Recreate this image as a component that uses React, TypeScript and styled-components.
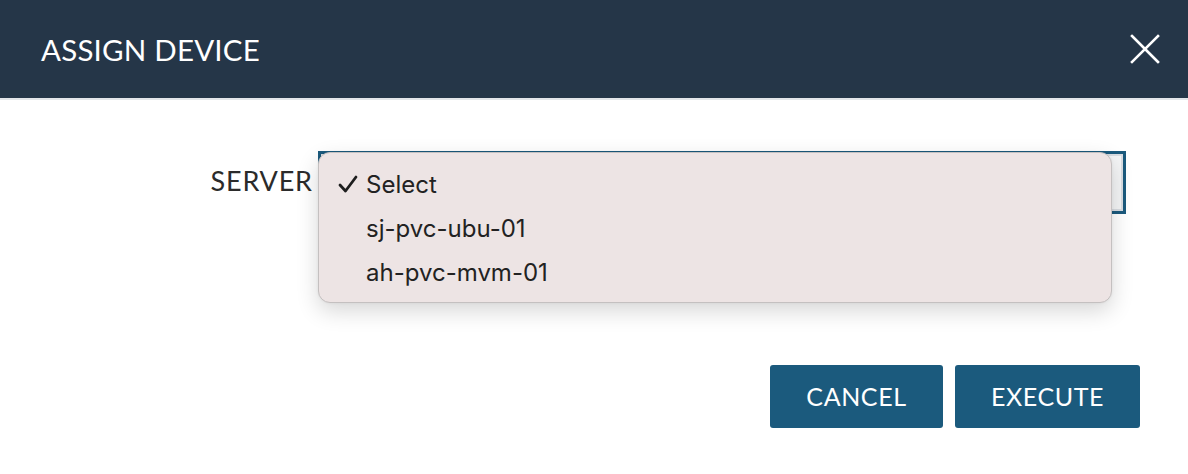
import React, { FC } from "react";
import styled, { createGlobalStyle } from "styled-components";

//styles
const GlobalStyle = createGlobalStyle`
    html, body {
        margin: 0;
        padding: 0;
        background: #ffffff;
    }
    body {
        font-family: "Lato", "Open Sans", sans-serif;
    }
`
const Modal = styled.div`
    width: 1188px;
    height: 474px;
    display: flex;
    flex-direction: column;
    background: #ffffff;
`
const Header = styled.div`
    height: 98px;
    display: flex;
    flex-direction: row;
    align-items: center;
    justify-content: space-between;
    padding: 0 26px 0 41px;
    background: #253648;
    border-bottom: 2px solid #e3e6ea;
`
const Title = styled.h1`
    margin: 0;
    font-size: 29.5px;
    font-weight: 400;
    color: #ffffff;
    letter-spacing: 0.2px;
`
const CloseButton = styled.button`
    border: none;
    background: none;
    padding: 0;
    width: 34px;
    height: 34px;
    display: flex;
    align-items: center;
    justify-content: center;
    cursor: pointer;
`
const Body = styled.div`
    flex-grow: 1;
    display: flex;
    flex-direction: column;
    padding: 51px 48px 0 0;
`
const FormRow = styled.div`
    display: grid;
    grid-template-columns: 312px 1fr;
    column-gap: 6px;
    align-items: center;
    padding-right: 14px;
`
const Label = styled.label`
    text-align: right;
    font-size: 27px;
    letter-spacing: 0.8px;
    margin-right: -0.8px;
    color: #2b2b2b;
    padding-bottom: 4px;
`
const SelectWrap = styled.div`
    position: relative;
`
const SelectBox = styled.div`
    height: 57px;
    border: 3px solid #1b5a7d;
    box-shadow: inset 0 0 0 2px #d9dde2;
    background: #f4f5f6;
`
const Menu = styled.ul`
    position: absolute;
    top: 1px;
    left: 0;
    width: 792px;
    margin: 0;
    padding: 9px 0 8px;
    list-style: none;
    background: #ede4e4;
    border: 1px solid #c4c0c0;
    border-radius: 12px;
    box-shadow: 0 8px 22px rgba(0, 0, 0, 0.16), 0 0 3px rgba(0, 0, 0, 0.06);
    font-family: "Inter", "Liberation Sans", sans-serif;
`
const Option = styled.li`
    display: flex;
    align-items: center;
    height: 44px;
    padding-left: 19px;
    font-size: 24px;
    color: #222222;
`
const Check = styled.span<{ visible: boolean }>`
    width: 28px;
    display: flex;
    align-items: center;
    visibility: ${(p) => (p.visible ? "visible" : "hidden")};
`
const Footer = styled.div`
    display: flex;
    flex-direction: row;
    justify-content: flex-end;
    gap: 12px;
    margin-top: auto;
    padding-bottom: 46px;
`
const Button = styled.button<{ wide?: boolean }>`
    width: ${(p) => (p.wide ? "185px" : "173px")};
    height: 63px;
    border: none;
    border-radius: 3px;
    background: #1b5a7d;
    color: #ffffff;
    font-family: "Lato", "Open Sans", sans-serif;
    font-size: 25px;
    letter-spacing: 0.6px;
    font-weight: 400;
    padding-bottom: 2px;
    cursor: pointer;
`

const options = ["Select", "sj-pvc-ubu-01", "ah-pvc-mvm-01"];

const App: FC = () => {
    return (
        <Modal>
            <GlobalStyle />
            <Header>
                <Title>ASSIGN DEVICE</Title>
                <CloseButton aria-label="close">
                    <svg width="32" height="32" viewBox="0 0 32 32">
                        <path d="M3 3 L29 29 M29 3 L3 29" stroke="#ffffff" strokeWidth="2.6" strokeLinecap="square" />
                    </svg>
                </CloseButton>
            </Header>
            <Body>
                <FormRow>
                    <Label>SERVER</Label>
                    <SelectWrap>
                        <SelectBox />
                        <Menu>
                            {options.map((o, i) => (
                                <Option key={o}>
                                    <Check visible={i === 0}>
                                        <svg width="20" height="18" viewBox="0 0 20 18">
                                            <path d="M2 10 L7.5 16 L18 2" stroke="#1e1e1e" strokeWidth="2.8" fill="none" strokeLinecap="round" strokeLinejoin="round" />
                                        </svg>
                                    </Check>
                                    {o}
                                </Option>
                            ))}
                        </Menu>
                    </SelectWrap>
                </FormRow>
                <Footer>
                    <Button>CANCEL</Button>
                    <Button wide>EXECUTE</Button>
                </Footer>
            </Body>
        </Modal>
    );
}

export default App;
